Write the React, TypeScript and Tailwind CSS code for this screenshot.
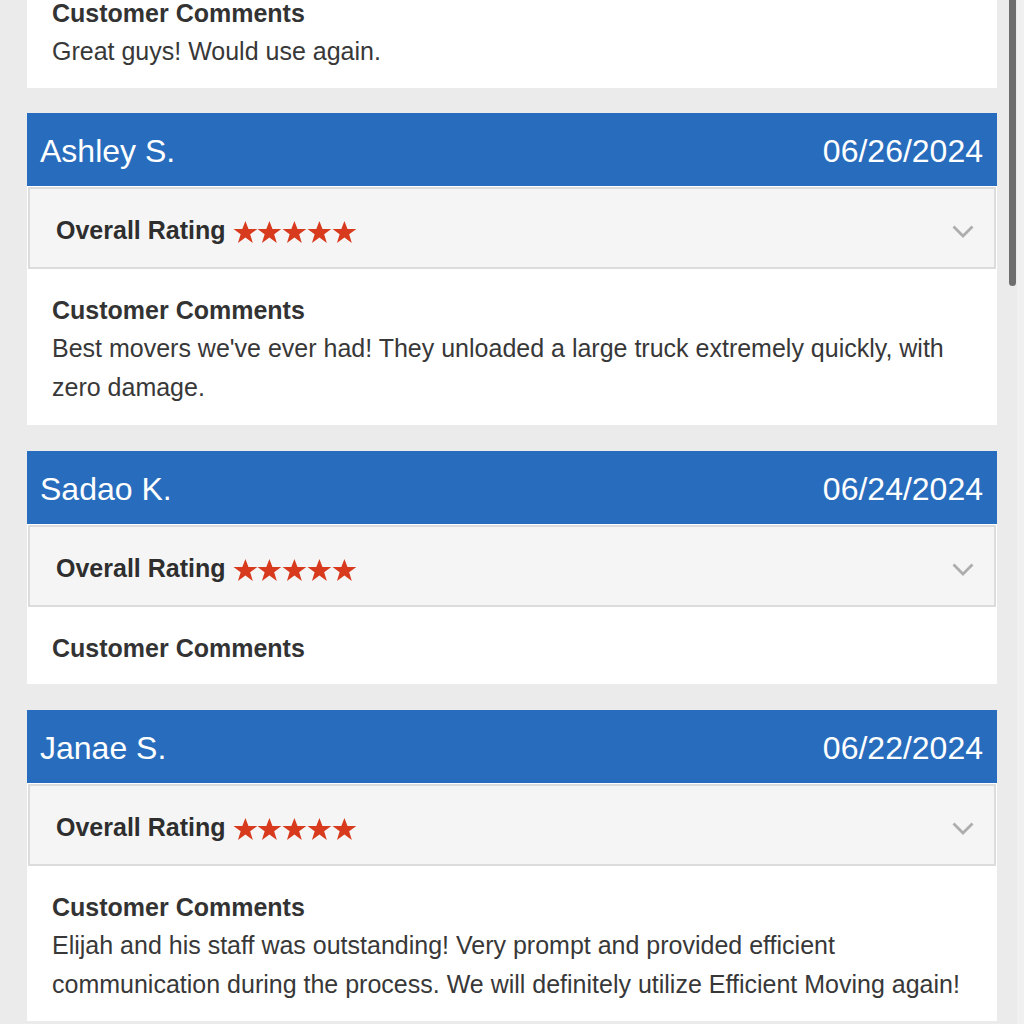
import React from "react";

type Review = { name: string; date: string; comment?: string };

const reviews: Review[] = [
  {
    name: "Ashley S.",
    date: "06/26/2024",
    comment:
      "Best movers we've ever had! They unloaded a large truck extremely quickly, with zero damage.",
  },
  { name: "Sadao K.", date: "06/24/2024" },
  {
    name: "Janae S.",
    date: "06/22/2024",
    comment:
      "Elijah and his staff was outstanding! Very prompt and provided efficient communication during the process. We will definitely utilize Efficient Moving again!",
  },
];

function Stars() {
  return (
    <div className="flex ml-[7px] mt-[3px]">
      {[0, 1, 2, 3, 4].map((i) => (
        <svg key={i} width="24.8" height="22" viewBox="0 0 25 22">
          <polygon
            points="12.5,0 15.6,8 24.5,8 17.3,13.2 20,22 12.5,16.6 5,22 7.7,13.2 0.5,8 9.4,8"
            fill="#d83a1d"
          />
        </svg>
      ))}
    </div>
  );
}

function Comments({ text, pb }: { text?: string; pb?: boolean }) {
  return (
    <div
      className={
        "bg-white pt-[22px] px-[25px] text-[25px] text-[#333333] " +
        (pb ? "pb-[18px]" : "pb-[17px]")
      }
    >
      <div className="font-bold leading-[38px]">Customer Comments</div>
      {text && <div className="leading-[39px] text-[#383838]">{text}</div>}
    </div>
  );
}

function Card({ r, extra }: { r: Review; extra?: boolean }) {
  return (
    <div className="bg-white mb-[1px]">
      <div className="h-[73px] bg-[#286dbd] flex items-center justify-between pl-[13px] pr-[14px] pt-[2px] text-white text-[32px] leading-none">
        <span>{r.name}</span>
        <span>{r.date}</span>
      </div>
      <div className="px-[1px] pt-[1px]">
        <div className="h-[82px] border-2 border-[#dcdcdc] bg-[#f5f5f5] flex items-center pl-[26px] pr-[20px] pt-[5px]">
          <span className="font-bold text-[25px] text-[#2e2e2e]">Overall Rating</span>
          <Stars />
          <div className="flex-1" />
          <svg width="22" height="13" viewBox="0 0 22 13" className="mt-[2px]">
            <polyline
              points="1.5,1.5 11,11 20.5,1.5"
              fill="none"
              stroke="#adadad"
              strokeWidth="2.8"
            />
          </svg>
        </div>
      </div>
      <Comments text={r.comment} pb={extra} />
    </div>
  );
}

export default function App() {
  return (
    <div
      className="relative w-[1024px] h-[1024px] overflow-hidden bg-[#ebebeb]"
      style={{ fontFamily: '"Liberation Sans", Arial, Helvetica, sans-serif' }}
    >
      <div className="ml-[27px] w-[970px] -mt-[28px] flex flex-col gap-[25px]">
        <Comments text="Great guys! Would use again." />
        {reviews.map((r, i) => (
          <Card key={r.name} r={r} extra={i === 0} />
        ))}
      </div>
      <div className="absolute top-0 right-0 w-[7px] h-full bg-[#f0f0f0]" />
      <div className="absolute top-[-10px] left-[1009px] w-[7px] h-[296px] rounded-full bg-[#6e6e6e]" />
    </div>
  );
}
